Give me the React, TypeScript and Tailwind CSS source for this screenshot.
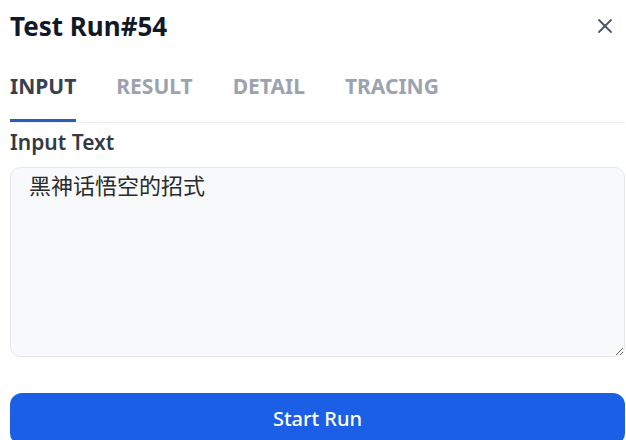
import { X } from "lucide-react";

const TABS = ["INPUT", "RESULT", "DETAIL", "TRACING"];

export default function App() {
  return (
    <div
      className="h-[440px] w-[626px] overflow-hidden bg-white pl-[10px] pr-px"
      style={{ fontFamily: '"Noto Sans", "Noto Sans CJK SC", sans-serif' }}
    >
      <div className="flex h-[52px] items-center justify-between">
        <h1 className="text-[26px] font-bold leading-none text-[#111827]">Test Run#54</h1>
        <button className="mr-[8px] text-[#4b5563]">
          <X className="h-[24px] w-[24px]" strokeWidth={1.8} />
        </button>
      </div>

      <div className="mt-[21px] flex gap-[40px] border-b border-[#eceef1]">
        {TABS.map((tab, i) => (
          <div
            key={tab}
            className={
              i === 0
                ? "border-b-[3px] border-[#2a5db8] pb-[20px] text-[21px] font-bold leading-[26px] text-[#374151]"
                : "border-b-[3px] border-transparent pb-[20px] text-[21px] font-bold leading-[26px] text-[#9ca3af]"
            }
          >
            {tab}
          </div>
        ))}
      </div>

      <div className="mt-[6px] text-[21px] font-semibold leading-[26px] text-[#333a44]">Input Text</div>

      <textarea
        className="mt-[12px] block h-[190px] w-full resize-y rounded-[10px] border border-[#e5e7eb] bg-[#f8f9fb] px-[18px] py-[2px] text-[22px] leading-[30px] text-[#2a2a2a] outline-none"
        defaultValue="黑神话悟空的招式"
      />

      <button className="mt-[36px] flex h-[52px] w-full items-center justify-center rounded-[12px] bg-[#1a5fe6] text-[20px] font-medium text-white">
        Start Run
      </button>
    </div>
  );
}
